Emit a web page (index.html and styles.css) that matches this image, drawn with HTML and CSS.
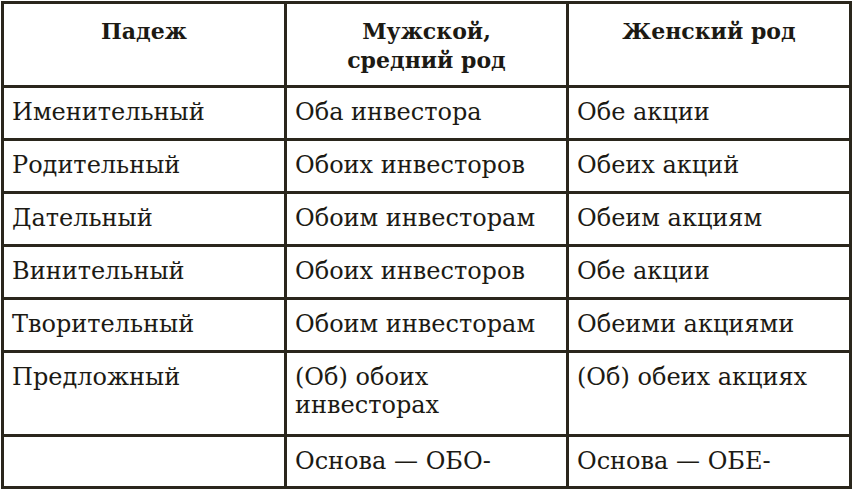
FILE: index.html
```html
<!DOCTYPE html>
<html lang="ru">
<head>
<meta charset="utf-8">
<link rel="stylesheet" href="styles.css">
</head>
<body>
<table class="grid">
  <colgroup>
    <col class="c1"><col class="c2"><col class="c3">
  </colgroup>
  <thead>
    <tr class="head">
      <th>Падеж</th>
      <th>Мужской,<br>средний род</th>
      <th>Женский род</th>
    </tr>
  </thead>
  <tbody>
    <tr class="row"><td>Именительный</td><td>Оба инвестора</td><td>Обе акции</td></tr>
    <tr class="row"><td>Родительный</td><td>Обоих инвесторов</td><td>Обеих акций</td></tr>
    <tr class="row"><td>Дательный</td><td>Обоим инвесторам</td><td>Обеим акциям</td></tr>
    <tr class="row"><td>Винительный</td><td>Обоих инвесторов</td><td>Обе акции</td></tr>
    <tr class="row"><td>Творительный</td><td>Обоим инвесторам</td><td>Обеими акциями</td></tr>
    <tr class="row tall"><td>Предложный</td><td>(Об) обоих<br>инвесторах</td><td>(Об) обеих акциях</td></tr>
    <tr class="row last"><td></td><td>Основа — ОБО-</td><td>Основа — ОБЕ-</td></tr>
  </tbody>
</table>
</body>
</html>
```

FILE: styles.css
```css
html, body {
  margin: 0;
  padding: 0;
  background: #ffffff;
}
body {
  padding: 1px 0 0 1px;
  font-family: "DejaVu Serif", "Liberation Serif", serif;
  color: #1c1a14;
}
.grid {
  border-collapse: collapse;
  table-layout: fixed;
  width: 851px;
}
.c1 { width: 283px; }
.c2 { width: 282px; }
.c3 { width: 283px; }
.grid th, .grid td {
  border: 3px solid #2a261c;
  vertical-align: top;
  text-align: left;
  padding: 0;
}
.grid th {
  font-weight: bold;
  font-size: 22px;
  line-height: 29px;
  text-align: center;
  padding-top: 13px;
}
.head { height: 84px; }
.grid td {
  font-size: 24px;
  line-height: 28px;
  padding: 10px 6px 0 8px;
}
.row { height: 53px; }
.tall { height: 84px; }
.last { height: 52px; }
```
